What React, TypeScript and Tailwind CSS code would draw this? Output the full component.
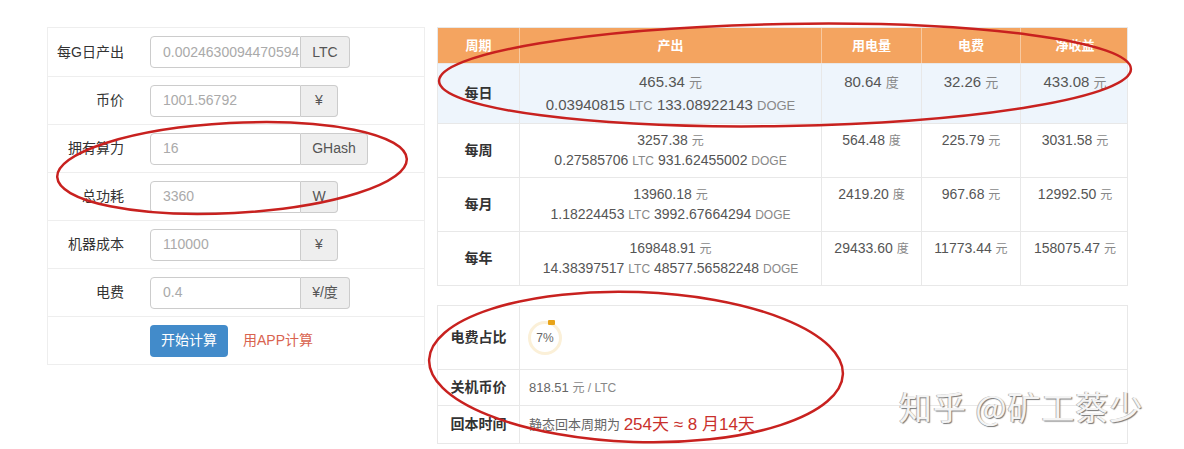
const font = { fontFamily: '"Liberation Sans", "Noto Sans CJK SC", sans-serif' };

interface Field {
  label: string;
  value: string;
  unit: string;
  unitW: string;
}

const fields: Field[] = [
  { label: "每G日产出", value: "0.0024630094470594", unit: "LTC", unitW: "w-[49px]" },
  { label: "币价", value: "1001.56792", unit: "¥", unitW: "w-[37px]" },
  { label: "拥有算力", value: "16", unit: "GHash", unitW: "w-[67px]" },
  { label: "总功耗", value: "3360", unit: "W", unitW: "w-[37px]" },
  { label: "机器成本", value: "110000", unit: "¥", unitW: "w-[37px]" },
  { label: "电费", value: "0.4", unit: "¥/度", unitW: "w-[49px]" },
];

interface Row {
  period: string;
  cny: string;
  ltc: string;
  doge: string;
  kwh: string;
  fee: string;
  net: string;
}

const rows: Row[] = [
  { period: "每日", cny: "465.34", ltc: "0.03940815", doge: "133.08922143", kwh: "80.64", fee: "32.26", net: "433.08" },
  { period: "每周", cny: "3257.38", ltc: "0.27585706", doge: "931.62455002", kwh: "564.48", fee: "225.79", net: "3031.58" },
  { period: "每月", cny: "13960.18", ltc: "1.18224453", doge: "3992.67664294", kwh: "2419.20", fee: "967.68", net: "12992.50" },
  { period: "每年", cny: "169848.91", ltc: "14.38397517", doge: "48577.56582248", kwh: "29433.60", fee: "11773.44", net: "158075.47" },
];

function Unit({ children, big }: { children: string; big?: boolean }) {
  return <span className={big ? "text-[13px] text-[#888]" : "text-[12px] text-[#888]"}>{children}</span>;
}

export default function App() {
  return (
    <div className="relative w-[1184px] h-[449px] bg-white overflow-hidden text-[#333]" style={font}>
      <div className="flex items-start pt-[27px] pl-[47px] gap-[12px]">
        {/* Form panel */}
        <div className="w-[378px] border border-[#eee] bg-white">
          {fields.map((f, i) => (
            <div key={i} className={`flex items-center h-[48px] ${i > 0 ? "border-t border-[#eee]" : ""}`}>
              <div className="w-[76px] text-right text-[14px] text-[#333]">{f.label}</div>
              <div className="ml-[26px] flex h-[32px]">
                <div className="w-[151px] border border-[#ccc] rounded-l-[4px] flex items-center pl-[12px] pr-[2px] text-[14px] text-[#aaa] overflow-hidden whitespace-nowrap">
                  {f.value}
                </div>
                <div className={`${f.unitW} border border-l-0 border-[#ccc] rounded-r-[4px] bg-[#eee] flex items-center justify-center text-[14px] text-[#555]`}>
                  {f.unit}
                </div>
              </div>
            </div>
          ))}
          <div className="flex items-center h-[48px] border-t border-[#eee]">
            <button className="ml-[102px] h-[32px] px-[11px] rounded-[4px] bg-[#428bca] text-white text-[14px]">开始计算</button>
            <span className="ml-[15px] text-[14px] text-[#d9634f]">用APP计算</span>
          </div>
        </div>

        {/* Results */}
        <div className="w-[691px] flex flex-col gap-[19px]">
          <div className="border border-[#e8e8e8]">
            <div className="grid grid-cols-[81px_302px_100px_99px_109px] h-[35px] bg-[#f4a460] text-white text-[13px] font-bold">
              {["周期", "产出", "用电量", "电费", "净收益"].map((h, i) => (
                <div key={i} className={`flex items-center justify-center ${i > 0 ? "border-l border-[#f8c9a0]" : ""}`}>
                  {h}
                </div>
              ))}
            </div>
            {rows.map((r, i) => {
              const first = i === 0;
              const size = first ? "text-[15px]" : "text-[14px]";
              const lh = first ? "leading-[22px]" : "leading-[19px]";
              return (
                <div
                  key={i}
                  className={`grid grid-cols-[81px_302px_100px_99px_109px] border-t border-[#e8e8e8] text-[#555] ${first ? "bg-[#eef5fc] h-[60px]" : "h-[54px]"}`}
                >
                  <div className="flex items-center justify-center text-[14px] font-bold text-[#333]">{r.period}</div>
                  <div className={`border-l border-[#e8e8e8] pt-[7px] text-center ${size} ${lh}`}>
                    <div>
                      {r.cny} <Unit big={first}>元</Unit>
                    </div>
                    <div>
                      {r.ltc} <Unit big={first}>LTC</Unit> {r.doge} <Unit big={first}>DOGE</Unit>
                    </div>
                  </div>
                  <div className={`border-l border-[#e8e8e8] pt-[7px] text-center ${size} ${lh}`}>
                    {r.kwh} <Unit big={first}>度</Unit>
                  </div>
                  <div className={`border-l border-[#e8e8e8] pt-[7px] text-center ${size} ${lh}`}>
                    {r.fee} <Unit big={first}>元</Unit>
                  </div>
                  <div className={`border-l border-[#e8e8e8] pt-[7px] text-center ${size} ${lh}`}>
                    {r.net} <Unit big={first}>元</Unit>
                  </div>
                </div>
              );
            })}
          </div>

          <div className="border border-[#e8e8e8]">
            <div className="grid grid-cols-[81px_1fr] h-[63px]">
              <div className="flex items-center justify-center text-[14px] font-bold">电费占比</div>
              <div className="border-l border-[#e8e8e8] flex items-center pl-[8px]">
                <div className="relative w-[34px] h-[34px] rounded-full border-[3px] border-[#fbf0d8] flex items-center justify-center text-[12px] text-[#666]">
                  <span className="absolute -top-[4px] left-[17px] w-[7px] h-[5px] bg-[#e8a317] rounded-[1px]" />
                  7%
                </div>
              </div>
            </div>
            <div className="grid grid-cols-[81px_1fr] h-[36px] border-t border-[#e8e8e8]">
              <div className="flex items-center justify-center text-[14px] font-bold">关机币价</div>
              <div className="border-l border-[#e8e8e8] flex items-center pl-[9px] text-[13px] text-[#666]">
                818.51&nbsp;<span className="text-[12px] text-[#888]">元 / LTC</span>
              </div>
            </div>
            <div className="grid grid-cols-[81px_1fr] h-[38px] border-t border-[#e8e8e8]">
              <div className="flex items-center justify-center text-[14px] font-bold">回本时间</div>
              <div className="border-l border-[#e8e8e8] flex items-center pl-[9px] text-[13px] text-[#666]">
                静态回本周期为&nbsp;<span className="text-[17px] text-[#c9302c]">254天 ≈ 8 月14天</span>
              </div>
            </div>
          </div>
        </div>
      </div>

      {/* Watermark */}
      <div className="absolute left-[899px] top-[382px] text-[33px] tracking-[1px] text-[#f4f4f4] [text-shadow:1px_1px_1px_#777,-1px_0_0_#bbb]" style={{ fontFamily: '"Noto Sans CJK SC", sans-serif' }}>
        知乎 @矿工蔡少
      </div>

      {/* Hand-drawn annotations */}
      <svg className="absolute inset-0 pointer-events-none" width="1184" height="449" viewBox="0 0 1184 449" fill="none">
        <ellipse cx="232" cy="168" rx="175" ry="45" transform="rotate(-3 232 168)" stroke="#c8211f" strokeWidth="2.5" />
        <ellipse cx="785" cy="75" rx="346" ry="51" transform="rotate(-1 785 75)" stroke="#c8211f" strokeWidth="2.5" />
        <ellipse cx="636" cy="367" rx="207" ry="75" transform="rotate(2 636 367)" stroke="#c8211f" strokeWidth="2.5" />
      </svg>
    </div>
  );
}
